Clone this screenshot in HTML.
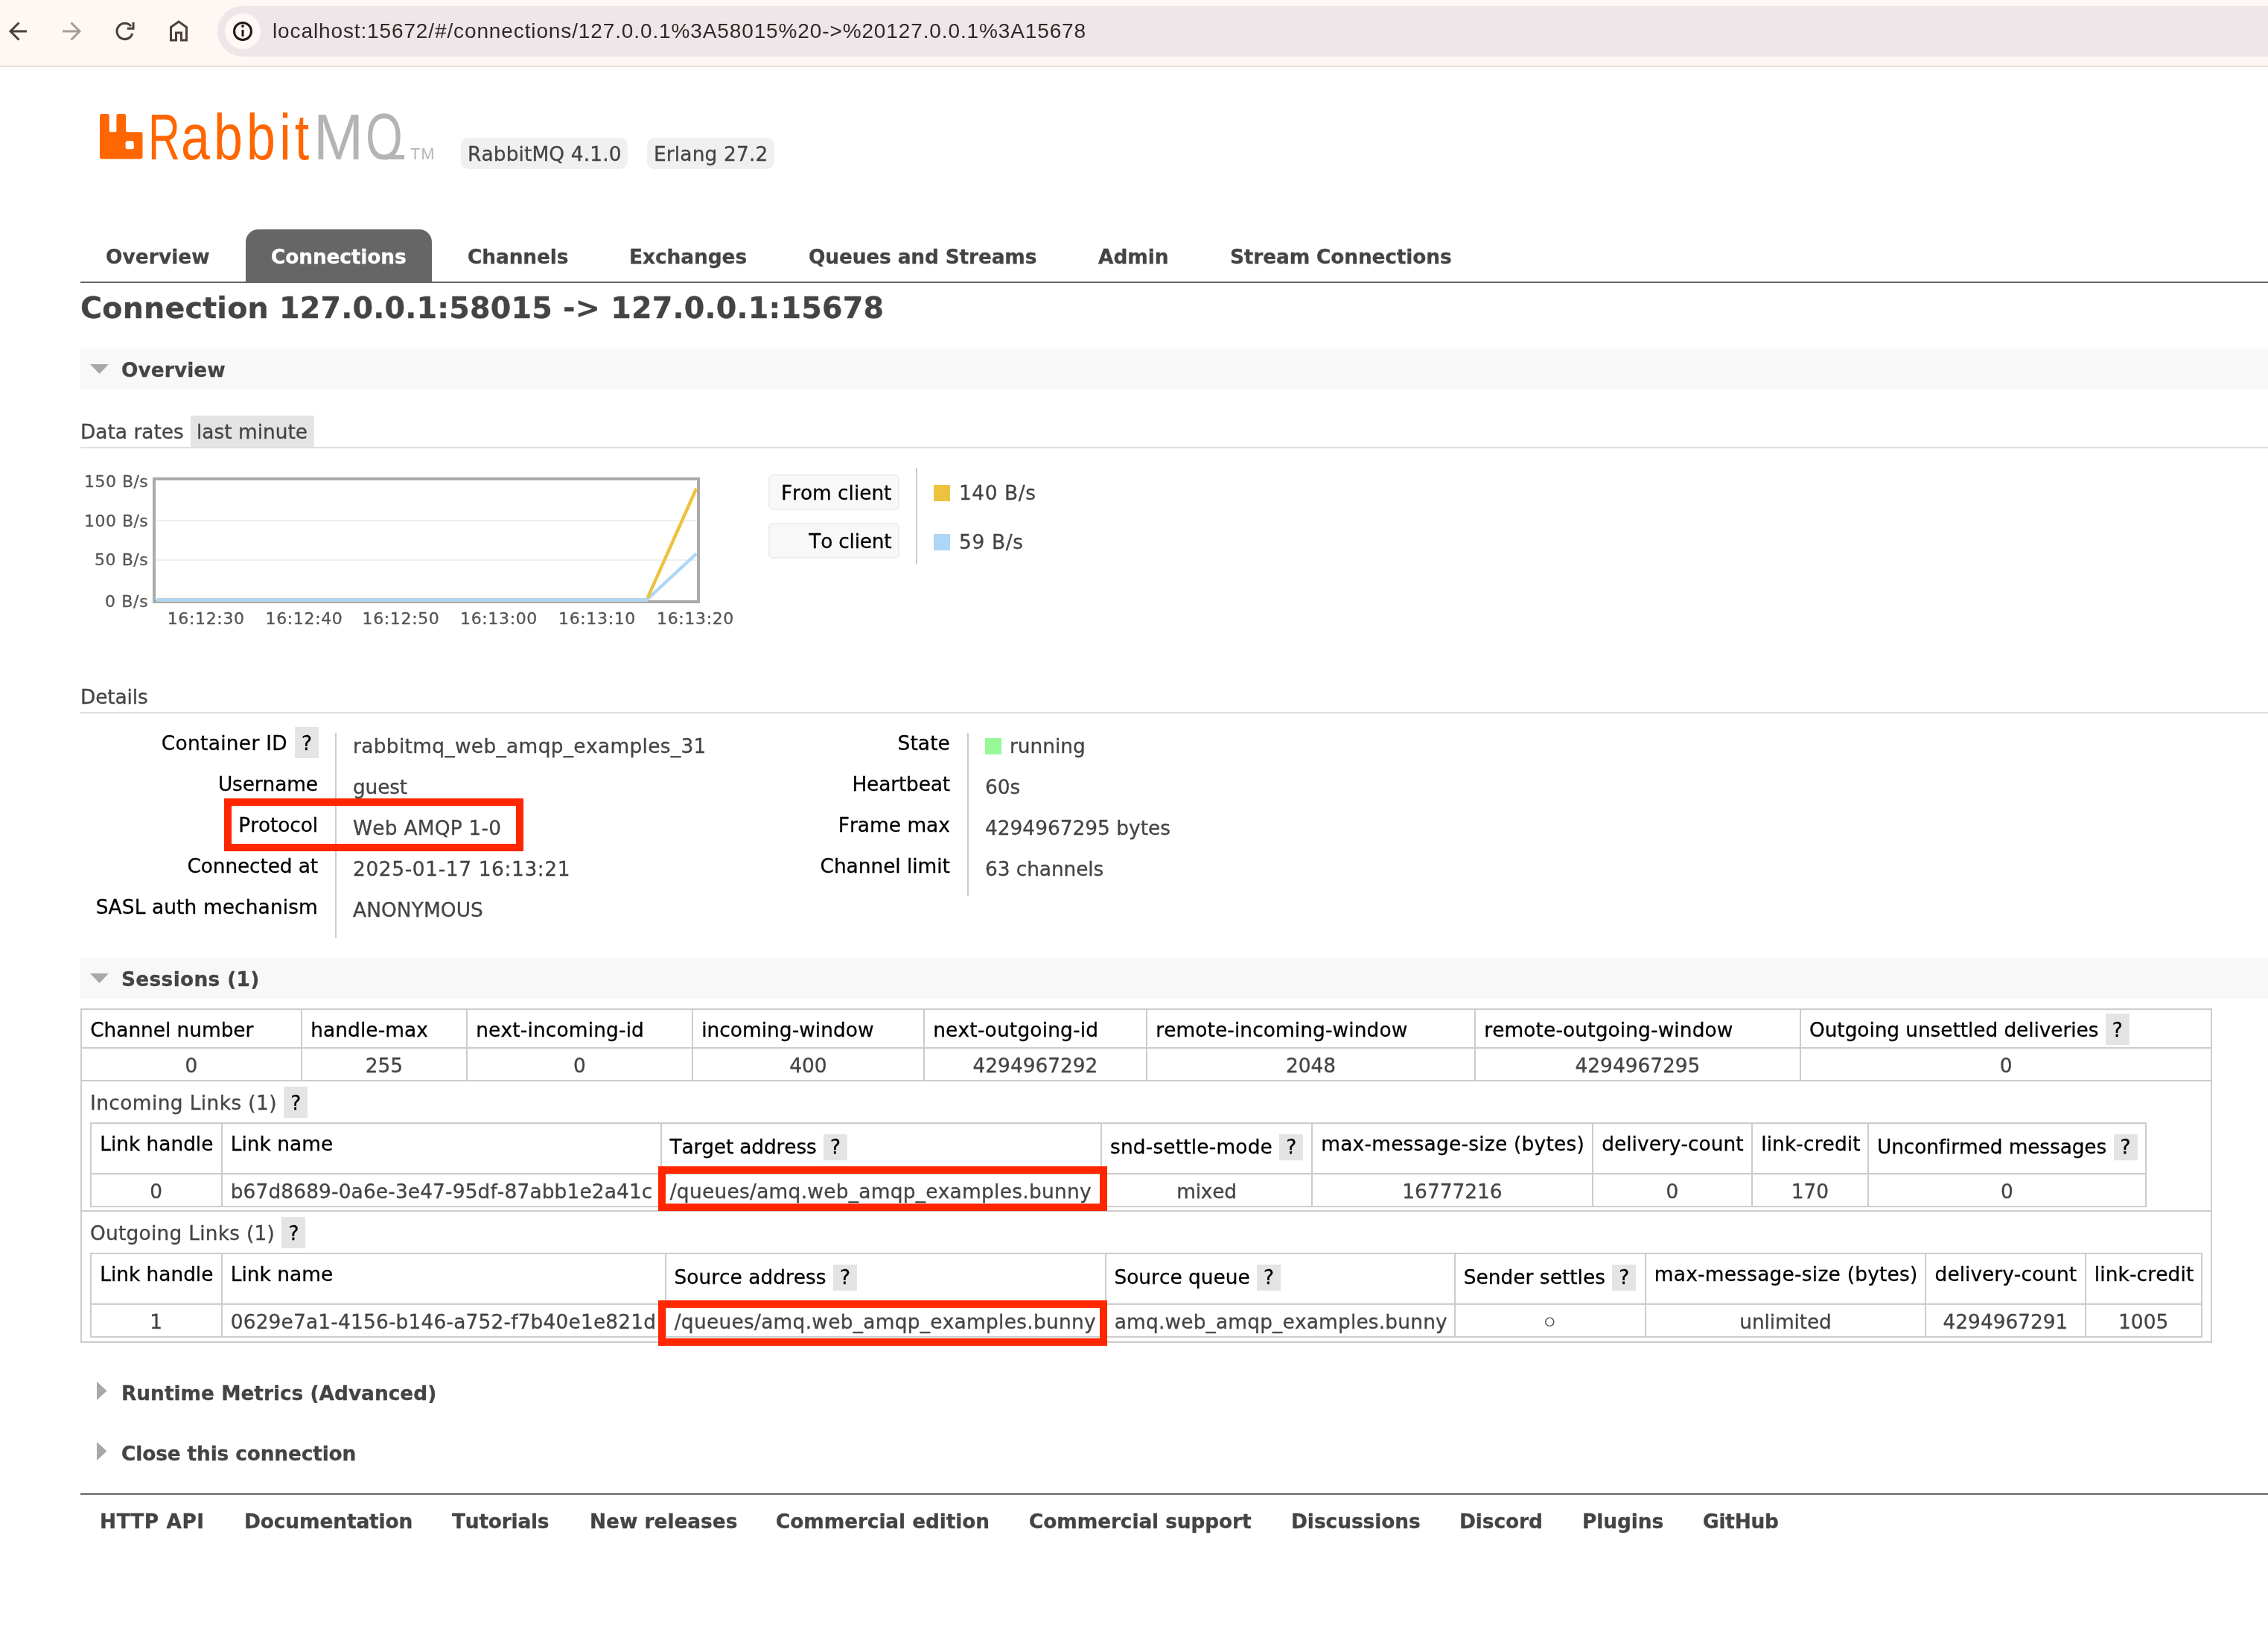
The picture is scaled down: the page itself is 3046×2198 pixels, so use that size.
<!DOCTYPE html>
<html lang="en"><head><meta charset="utf-8"><title>RabbitMQ Management</title>
<style>
html,body{margin:0;padding:0;background:#fff;}
body{width:3046px;height:2198px;position:relative;overflow:hidden;font-family:"DejaVu Sans","Liberation Sans",sans-serif;}
#p{position:absolute;left:0;top:0;width:3046px;height:2198px;will-change:transform;}
#p>div,#p>svg{position:absolute;}
.t{white-space:nowrap;line-height:1;font-size:26.4px;color:#444;font-kerning:none;-webkit-text-stroke:.3px;}
.l{-webkit-text-stroke:0;}

</style></head><body><div id="p">
<div style="left:0px;top:0px;width:3046px;height:88px;background:#fef7f4;"></div>
<div style="left:0px;top:88px;width:3046px;height:2px;background:#e8dfdc;"></div>
<div style="left:292px;top:8px;width:2800px;height:68px;background:#ede7e9;border-radius:34px;"></div>
<div style="left:302px;top:18px;width:48px;height:48px;background:#fef7f4;border-radius:24px;"></div>
<svg style="left:0;top:0" width="360" height="88" viewBox="0 0 360 88" fill="none" stroke-linecap="butt" stroke-linejoin="miter">
<g stroke="#4d3f39" stroke-width="3">
<path d="M36 42H15M25.5 30.5L14 42l11.5 11.5"/>
<path d="M175.800 35.200A10.600 10.600 0 1 0 177.800 45"/><path d="M179 30v8.200h-8.200"/>
<path d="M229.5 54V36.5L240 29l10.500 7.500V54h-7V44h-7v10z" stroke-linejoin="miter"/>
</g>
<g stroke="#a59d9a" stroke-width="3"><path d="M84 42h21M95.500 30.500L107 42 95.500 53.500"/></g>
<circle cx="326" cy="42" r="11.500" stroke="#1f1a19" stroke-width="3"/>
<path d="M326 40v9" stroke="#1f1a19" stroke-width="3"/><circle cx="326" cy="35" r="1.900" fill="#1f1a19"/>
</svg>
<div class="t l" style="left:366.00px;top:28.30px;font-size:28px;color:#2f2926;font-family:'Liberation Sans',sans-serif;letter-spacing:0.878px;">localhost:15672/#/connections/127.0.0.1%3A58015%20->%20127.0.0.1%3A15678</div>
<svg style="left:133.2px;top:152px" width="59" height="62.400" viewBox="0 0 58 62" preserveAspectRatio="none">
<path fill="#f60" d="M55.500 25H37.500a2 2 0 0 1-2-2V3.500A2.500 2.500 0 0 0 33 1h-7.500A2.500 2.500 0 0 0 23 3.500V23a2 2 0 0 1-2 2h-5.500a2 2 0 0 1-2-2V3.500A2.500 2.500 0 0 0 11 1H3.500A2.500 2.500 0 0 0 1 3.500v55A2.500 2.500 0 0 0 3.500 61h51.500a2.500 2.500 0 0 0 2.500-2.500V27.500A2.500 2.500 0 0 0 55.500 25zM46 45.500a2.500 2.500 0 0 1-2.500 2.500h-6a2.500 2.500 0 0 1-2.500-2.500v-6a2.500 2.500 0 0 1 2.500-2.500h6a2.500 2.500 0 0 1 2.500 2.500z"/>
</svg>
<div class="t l" style="left:199px;top:140.5px;font-size:87.5px;color:#f60;font-family:'Liberation Sans',sans-serif"><span style="display:inline-block;transform:scaleX(.68);transform-origin:0 0;margin-right:-19px">R</span><span style="display:inline-block;transform:scaleX(.8);transform-origin:0 0;letter-spacing:6.4px">abbit</span></div>
<div class="t l" style="left:420.8px;top:140.5px;font-size:87.5px;color:#b4b4b4;font-family:'Liberation Sans',sans-serif"><span style="display:inline-block;transform:scaleX(.92);transform-origin:0 0">M</span><span style="display:inline-block;transform:scaleX(.73);transform-origin:0 0;margin-left:-2.3px;clip-path:inset(0 0 13.4px 0)">Q</span></div>
<div style="left:517px;top:208.2px;width:25.7px;height:5.8px;background:#b4b4b4;"></div>
<div class="t l" style="left:551.00px;top:196.53px;font-size:21.5px;color:#b4b4b4;font-family:'Liberation Sans',sans-serif;letter-spacing:1.479px;">TM</div>
<div style="left:619px;top:185px;width:224px;height:42px;background:#f0f0f0;border-radius:10px;"></div>
<div class="t" style="left:628.00px;top:193.82px;letter-spacing:0.130px;">RabbitMQ 4.1.0</div>
<div style="left:869px;top:185px;width:171px;height:42px;background:#f0f0f0;border-radius:10px;"></div>
<div class="t" style="left:878.00px;top:193.82px;letter-spacing:0.162px;">Erlang 27.2</div>
<div style="left:330px;top:308px;width:250px;height:71px;background:#666;border-radius:17px 17px 0 0;"></div>
<div style="left:108px;top:378px;width:2938px;height:2.2px;background:#666;"></div>
<div class="t" style="left:142.00px;top:331.82px;font-weight:700;letter-spacing:0.086px;">Overview</div>
<div class="t" style="left:364.00px;top:331.82px;color:#fff;font-weight:700;letter-spacing:-0.129px;">Connections</div>
<div class="t" style="left:628.00px;top:331.82px;font-weight:700;letter-spacing:-0.111px;">Channels</div>
<div class="t" style="left:845.00px;top:331.82px;font-weight:700;letter-spacing:-0.061px;">Exchanges</div>
<div class="t" style="left:1086.00px;top:331.82px;font-weight:700;letter-spacing:-0.150px;">Queues and Streams</div>
<div class="t" style="left:1475.00px;top:331.82px;font-weight:700;">Admin</div>
<div class="t" style="left:1652.00px;top:331.82px;font-weight:700;letter-spacing:-0.137px;">Stream Connections</div>
<div class="t" style="left:108.00px;top:393.74px;font-size:39.6px;font-weight:700;letter-spacing:0.220px;">Connection 127.0.0.1:58015 -> 127.0.0.1:15678</div>
<div style="left:108px;top:468px;width:2938px;height:55px;background:#f8f8f8;"></div>
<svg style="left:120px;top:487.8px" width="28" height="15" viewBox="0 0 28 15"><path d="M1 1h25L13.500 14z" fill="#a8a8a8"/></svg>
<div class="t" style="left:163.00px;top:484.02px;font-weight:700;letter-spacing:0.086px;">Overview</div>
<div class="t" style="left:108.00px;top:566.82px;">Data rates</div>
<div style="left:256px;top:558px;width:166px;height:42px;background:#e4e4e4;"></div>
<div class="t" style="left:264.00px;top:566.82px;letter-spacing:-0.008px;">last minute</div>
<div style="left:108px;top:600px;width:2938px;height:1.8px;background:#dfdfdf;"></div>
<div style="left:205.3px;top:641.1px;width:734.4px;height:168.6px;background:#fff;border:4.400px solid #aaa;box-sizing:border-box;"></div>
<div style="left:210px;top:698px;width:725px;height:2px;background:#eee;"></div>
<div style="left:210px;top:751px;width:725px;height:2px;background:#eee;"></div>
<svg style="left:205px;top:641px" width="735" height="170" viewBox="205 641 735 170" fill="none" stroke-width="4.400" stroke-linejoin="round">
<path d="M210 805.500H868.500L935.200 743.500" stroke="#aed6f6"/>
<path d="M210 805.500H868.500L935.200 656" stroke="#edc240"/>
<path d="M210 805.500H868.500L935.200 743.500" stroke="#aed6f6" stroke-dasharray="662 1000"/>
</svg>
<div class="t" style="left:113.04px;top:635.82px;font-size:22px;color:#555;letter-spacing:0.473px;">150 B/s</div>
<div class="t" style="left:113.04px;top:688.82px;font-size:22px;color:#555;letter-spacing:0.473px;">100 B/s</div>
<div class="t" style="left:127.03px;top:741.32px;font-size:22px;color:#555;letter-spacing:0.553px;">50 B/s</div>
<div class="t" style="left:141.02px;top:797.02px;font-size:22px;color:#555;letter-spacing:0.664px;">0 B/s</div>
<div class="t" style="left:224.74px;top:820.02px;font-size:22px;color:#545454;letter-spacing:0.640px;">16:12:30</div>
<div class="t" style="left:356.54px;top:820.02px;font-size:22px;color:#545454;letter-spacing:0.640px;">16:12:40</div>
<div class="t" style="left:486.54px;top:820.02px;font-size:22px;color:#545454;letter-spacing:0.640px;">16:12:50</div>
<div class="t" style="left:618.04px;top:820.02px;font-size:22px;color:#545454;letter-spacing:0.640px;">16:13:00</div>
<div class="t" style="left:750.04px;top:820.02px;font-size:22px;color:#545454;letter-spacing:0.640px;">16:13:10</div>
<div class="t" style="left:882.04px;top:820.02px;font-size:22px;color:#545454;letter-spacing:0.640px;">16:13:20</div>
<div style="left:1032px;top:637px;width:176px;height:47.5px;background:#f8f8f8;border:2px solid #eee;box-sizing:border-box;border-radius:6px;"></div>
<div class="t" style="left:1048.97px;top:648.82px;color:#000;letter-spacing:-0.026px;">From client</div>
<div style="left:1032px;top:702px;width:176px;height:47.5px;background:#f8f8f8;border:2px solid #eee;box-sizing:border-box;border-radius:6px;"></div>
<div class="t" style="left:1086.25px;top:713.82px;color:#000;letter-spacing:-0.214px;">To client</div>
<div style="left:1230px;top:628px;width:2px;height:130px;background:#ccc;"></div>
<div style="left:1254px;top:651px;width:22px;height:22px;background:#edc240;"></div>
<div style="left:1254px;top:717px;width:22px;height:22px;background:#aed6f6;"></div>
<div class="t" style="left:1288.00px;top:648.82px;letter-spacing:0.568px;">140 B/s</div>
<div class="t" style="left:1288.00px;top:714.82px;letter-spacing:0.663px;">59 B/s</div>
<div class="t" style="left:108.00px;top:922.82px;letter-spacing:-0.135px;">Details</div>
<div style="left:108px;top:956px;width:2938px;height:1.8px;background:#dfdfdf;"></div>
<div style="left:450px;top:984px;width:2px;height:275px;background:#ccc;"></div>
<div style="left:1299px;top:984px;width:2px;height:219px;background:#ccc;"></div>
<div class="t" style="left:216.86px;top:985.02px;color:#000;letter-spacing:0.302px;">Container ID</div>
<div class="t" style="left:474.00px;top:989.02px;letter-spacing:0.342px;">rabbitmq_web_amqp_examples_31</div>
<div class="t" style="left:292.91px;top:1040.02px;color:#000;letter-spacing:-0.120px;">Username</div>
<div class="t" style="left:474.00px;top:1044.02px;letter-spacing:-0.158px;">guest</div>
<div class="t" style="left:320.34px;top:1095.02px;color:#000;letter-spacing:-0.097px;">Protocol</div>
<div class="t" style="left:474.00px;top:1099.02px;letter-spacing:0.242px;">Web AMQP 1-0</div>
<div class="t" style="left:251.49px;top:1150.02px;color:#000;letter-spacing:-0.131px;">Connected at</div>
<div class="t" style="left:474.00px;top:1154.02px;letter-spacing:0.627px;">2025-01-17 16:13:21</div>
<div class="t" style="left:128.71px;top:1205.02px;color:#000;letter-spacing:0.122px;">SASL auth mechanism</div>
<div class="t" style="left:474.00px;top:1209.02px;letter-spacing:0.098px;">ANONYMOUS</div>
<div style="left:396px;top:976px;width:32px;height:41.7px;background:#e4e4e4;"></div>
<div class="t" style="left:404.99px;top:985.02px;color:#000;">?</div>
<div class="t" style="left:1205.54px;top:985.02px;color:#000;letter-spacing:0.116px;">State</div>
<div class="t" style="left:1356.00px;top:989.02px;letter-spacing:-0.011px;">running</div>
<div class="t" style="left:1144.45px;top:1040.02px;color:#000;letter-spacing:-0.162px;">Heartbeat</div>
<div class="t" style="left:1323.00px;top:1044.02px;">60s</div>
<div class="t" style="left:1125.78px;top:1095.02px;color:#000;letter-spacing:0.014px;">Frame max</div>
<div class="t" style="left:1323.00px;top:1099.02px;">4294967295 bytes</div>
<div class="t" style="left:1101.52px;top:1150.02px;color:#000;letter-spacing:-0.029px;">Channel limit</div>
<div class="t" style="left:1323.00px;top:1154.02px;letter-spacing:-0.078px;">63 channels</div>
<div style="left:1323px;top:991px;width:22px;height:22px;background:#98f898;"></div>
<div style="left:108px;top:1286px;width:2938px;height:55px;background:#f8f8f8;"></div>
<svg style="left:120px;top:1305.8px" width="28" height="15" viewBox="0 0 28 15"><path d="M1 1h25L13.500 14z" fill="#a8a8a8"/></svg>
<div class="t" style="left:163.00px;top:1302.02px;font-weight:700;letter-spacing:0.328px;">Sessions (1)</div>
<div style="left:108px;top:1354px;width:2863.2px;height:2px;background:#ccc;"></div>
<div style="left:108px;top:1406px;width:2863.2px;height:2px;background:#ccc;"></div>
<div style="left:108px;top:1450px;width:2863.2px;height:2px;background:#ccc;"></div>
<div style="left:108px;top:1625px;width:2863.2px;height:2px;background:#ccc;"></div>
<div style="left:108px;top:1800.5px;width:2863.2px;height:2px;background:#ccc;"></div>
<div style="left:404px;top:1354px;width:2px;height:98px;background:#ccc;"></div>
<div style="left:626px;top:1354px;width:2px;height:98px;background:#ccc;"></div>
<div style="left:929px;top:1354px;width:2px;height:98px;background:#ccc;"></div>
<div style="left:1240px;top:1354px;width:2px;height:98px;background:#ccc;"></div>
<div style="left:1539px;top:1354px;width:2px;height:98px;background:#ccc;"></div>
<div style="left:1980px;top:1354px;width:2px;height:98px;background:#ccc;"></div>
<div style="left:2417px;top:1354px;width:2px;height:98px;background:#ccc;"></div>
<div style="left:108px;top:1354px;width:2px;height:448.5px;background:#ccc;"></div>
<div style="left:2969.2px;top:1354px;width:2px;height:448.5px;background:#ccc;"></div>
<div class="t" style="left:121.20px;top:1369.82px;color:#000;letter-spacing:-0.040px;">Channel number</div>
<div class="t" style="left:417.20px;top:1369.82px;color:#000;letter-spacing:0.085px;">handle-max</div>
<div class="t" style="left:639.20px;top:1369.82px;color:#000;letter-spacing:0.160px;">next-incoming-id</div>
<div class="t" style="left:942.20px;top:1369.82px;color:#000;letter-spacing:0.029px;">incoming-window</div>
<div class="t" style="left:1253.20px;top:1369.82px;color:#000;letter-spacing:0.192px;">next-outgoing-id</div>
<div class="t" style="left:1552.20px;top:1369.82px;color:#000;letter-spacing:0.100px;">remote-incoming-window</div>
<div class="t" style="left:1993.20px;top:1369.82px;color:#000;letter-spacing:0.122px;">remote-outgoing-window</div>
<div class="t" style="left:2430.00px;top:1369.82px;color:#000;letter-spacing:-0.073px;">Outgoing unsettled deliveries</div>
<div style="left:2827.7688px;top:1361px;width:32px;height:41.7px;background:#e4e4e4;"></div>
<div class="t" style="left:2836.76px;top:1369.82px;color:#000;">?</div>
<div class="t" style="left:248.60px;top:1418.32px;">0</div>
<div class="t" style="left:490.81px;top:1418.32px;letter-spacing:-0.006px;">255</div>
<div class="t" style="left:770.10px;top:1418.32px;">0</div>
<div class="t" style="left:1060.31px;top:1418.32px;letter-spacing:-0.006px;">400</div>
<div class="t" style="left:1306.55px;top:1418.32px;letter-spacing:-0.006px;">4294967292</div>
<div class="t" style="left:1726.92px;top:1418.32px;letter-spacing:-0.006px;">2048</div>
<div class="t" style="left:2115.55px;top:1418.32px;letter-spacing:-0.006px;">4294967295</div>
<div class="t" style="left:2685.70px;top:1418.32px;">0</div>
<div class="t" style="left:121.00px;top:1467.82px;letter-spacing:0.408px;">Incoming Links (1)</div>
<div style="left:381.35679999999996px;top:1459px;width:32px;height:41.7px;background:#e4e4e4;"></div>
<div class="t" style="left:390.35px;top:1467.82px;color:#000;">?</div>
<div class="t" style="left:121.00px;top:1642.82px;letter-spacing:0.252px;">Outgoing Links (1)</div>
<div style="left:378.42639999999994px;top:1634px;width:32px;height:41.7px;background:#e4e4e4;"></div>
<div class="t" style="left:387.42px;top:1642.82px;color:#000;">?</div>
<div style="left:121px;top:1507px;width:2762px;height:2px;background:#ccc;"></div>
<div style="left:121px;top:1574.5px;width:2762px;height:2px;background:#ccc;"></div>
<div style="left:121px;top:1619px;width:2762px;height:2px;background:#ccc;"></div>
<div style="left:121px;top:1507px;width:2px;height:114px;background:#ccc;"></div>
<div style="left:296.5px;top:1507px;width:2px;height:114px;background:#ccc;"></div>
<div style="left:886.5px;top:1507px;width:2px;height:114px;background:#ccc;"></div>
<div style="left:1478px;top:1507px;width:2px;height:114px;background:#ccc;"></div>
<div style="left:1761px;top:1507px;width:2px;height:114px;background:#ccc;"></div>
<div style="left:2138px;top:1507px;width:2px;height:114px;background:#ccc;"></div>
<div style="left:2352px;top:1507px;width:2px;height:114px;background:#ccc;"></div>
<div style="left:2508px;top:1507px;width:2px;height:114px;background:#ccc;"></div>
<div style="left:2881px;top:1507px;width:2px;height:114px;background:#ccc;"></div>
<div class="t" style="left:134.20px;top:1522.82px;color:#000;letter-spacing:-0.014px;">Link handle</div>
<div class="t" style="left:309.70px;top:1522.82px;color:#000;letter-spacing:0.027px;">Link name</div>
<div class="t" style="left:899.50px;top:1526.92px;color:#000;letter-spacing:-0.146px;">Target address</div>
<div style="left:1105.948px;top:1522.6px;width:32px;height:35.5px;background:#e4e4e4;"></div>
<div class="t" style="left:1114.94px;top:1526.92px;color:#000;">?</div>
<div class="t" style="left:1491.00px;top:1526.92px;color:#000;letter-spacing:0.173px;">snd-settle-mode</div>
<div style="left:1718.3304px;top:1522.6px;width:32px;height:35.5px;background:#e4e4e4;"></div>
<div class="t" style="left:1727.32px;top:1526.92px;color:#000;">?</div>
<div class="t" style="left:1774.20px;top:1522.82px;color:#000;letter-spacing:0.243px;">max-message-size (bytes)</div>
<div class="t" style="left:2151.20px;top:1522.82px;color:#000;letter-spacing:0.034px;">delivery-count</div>
<div class="t" style="left:2365.20px;top:1522.82px;color:#000;letter-spacing:0.124px;">link-credit</div>
<div class="t" style="left:2521.00px;top:1526.92px;color:#000;letter-spacing:-0.111px;">Unconfirmed messages</div>
<div style="left:2838.5128px;top:1522.6px;width:32px;height:35.5px;background:#e4e4e4;"></div>
<div class="t" style="left:2847.51px;top:1526.92px;color:#000;">?</div>
<div class="t" style="left:201.35px;top:1586.92px;">0</div>
<div class="t" style="left:309.70px;top:1586.92px;letter-spacing:0.137px;">b67d8689-0a6e-3e47-95df-87abb1e2a41c</div>
<div class="t" style="left:899.70px;top:1586.92px;letter-spacing:0.282px;">/queues/amq.web_amqp_examples.bunny</div>
<div class="t" style="left:1580.13px;top:1586.92px;letter-spacing:-0.189px;">mixed</div>
<div class="t" style="left:1883.34px;top:1586.92px;letter-spacing:-0.006px;">16777216</div>
<div class="t" style="left:2237.60px;top:1586.92px;">0</div>
<div class="t" style="left:2405.81px;top:1586.92px;letter-spacing:-0.006px;">170</div>
<div class="t" style="left:2687.10px;top:1586.92px;">0</div>
<div style="left:121px;top:1682px;width:2836.7px;height:2px;background:#ccc;"></div>
<div style="left:121px;top:1749.5px;width:2836.7px;height:2px;background:#ccc;"></div>
<div style="left:121px;top:1794px;width:2836.7px;height:2px;background:#ccc;"></div>
<div style="left:121px;top:1682px;width:2px;height:114px;background:#ccc;"></div>
<div style="left:296.5px;top:1682px;width:2px;height:114px;background:#ccc;"></div>
<div style="left:892.5px;top:1682px;width:2px;height:114px;background:#ccc;"></div>
<div style="left:1483.5px;top:1682px;width:2px;height:114px;background:#ccc;"></div>
<div style="left:1952.8px;top:1682px;width:2px;height:114px;background:#ccc;"></div>
<div style="left:2208.6px;top:1682px;width:2px;height:114px;background:#ccc;"></div>
<div style="left:2585.4px;top:1682px;width:2px;height:114px;background:#ccc;"></div>
<div style="left:2799.6px;top:1682px;width:2px;height:114px;background:#ccc;"></div>
<div style="left:2955.7px;top:1682px;width:2px;height:114px;background:#ccc;"></div>
<div class="t" style="left:134.20px;top:1697.82px;color:#000;letter-spacing:-0.014px;">Link handle</div>
<div class="t" style="left:309.70px;top:1697.82px;color:#000;letter-spacing:0.027px;">Link name</div>
<div class="t" style="left:905.50px;top:1701.92px;color:#000;letter-spacing:0.013px;">Source address</div>
<div style="left:1118.9176px;top:1697.6px;width:32px;height:35.5px;background:#e4e4e4;"></div>
<div class="t" style="left:1127.91px;top:1701.92px;color:#000;">?</div>
<div class="t" style="left:1496.50px;top:1701.92px;color:#000;letter-spacing:-0.014px;">Source queue</div>
<div style="left:1687.9792px;top:1697.6px;width:32px;height:35.5px;background:#e4e4e4;"></div>
<div class="t" style="left:1696.97px;top:1701.92px;color:#000;">?</div>
<div class="t" style="left:1965.80px;top:1701.92px;color:#000;letter-spacing:0.018px;">Sender settles</div>
<div style="left:2165.3576px;top:1697.6px;width:32px;height:35.5px;background:#e4e4e4;"></div>
<div class="t" style="left:2174.35px;top:1701.92px;color:#000;">?</div>
<div class="t" style="left:2221.80px;top:1697.82px;color:#000;letter-spacing:0.243px;">max-message-size (bytes)</div>
<div class="t" style="left:2598.60px;top:1697.82px;color:#000;letter-spacing:0.034px;">delivery-count</div>
<div class="t" style="left:2812.80px;top:1697.82px;color:#000;letter-spacing:0.124px;">link-credit</div>
<div class="t" style="left:201.35px;top:1761.92px;">1</div>
<div class="t" style="left:309.70px;top:1761.92px;letter-spacing:0.184px;">0629e7a1-4156-b146-a752-f7b40e1e821d</div>
<div class="t" style="left:905.70px;top:1761.92px;letter-spacing:0.282px;">/queues/amq.web_amqp_examples.bunny</div>
<div class="t" style="left:1496.70px;top:1761.92px;letter-spacing:0.187px;">amq.web_amqp_examples.bunny</div>
<div class="t" style="left:2074.39px;top:1766.70px;font-size:15.6px;">○</div>
<div class="t" style="left:2336.30px;top:1761.92px;letter-spacing:-0.127px;">unlimited</div>
<div class="t" style="left:2609.55px;top:1761.92px;letter-spacing:-0.006px;">4294967291</div>
<div class="t" style="left:2845.07px;top:1761.92px;letter-spacing:-0.006px;">1005</div>
<svg style="left:129px;top:1854px" width="16" height="27" viewBox="0 0 16 27"><path d="M1 1v25L14.500 13.500z" fill="#a8a8a8"/></svg>
<div class="t" style="left:163.00px;top:1858.02px;font-weight:700;">Runtime Metrics (Advanced)</div>
<svg style="left:129px;top:1935px" width="16" height="27" viewBox="0 0 16 27"><path d="M1 1v25L14.500 13.500z" fill="#a8a8a8"/></svg>
<div class="t" style="left:163.00px;top:1939.02px;font-weight:700;letter-spacing:-0.139px;">Close this connection</div>
<div style="left:108px;top:2005px;width:2938px;height:2.2px;background:#666;"></div>
<div class="t" style="left:134.00px;top:2029.82px;font-weight:700;letter-spacing:0.561px;">HTTP API</div>
<div class="t" style="left:328.00px;top:2029.82px;font-weight:700;letter-spacing:-0.111px;">Documentation</div>
<div class="t" style="left:607.00px;top:2029.82px;font-weight:700;letter-spacing:-0.202px;">Tutorials</div>
<div class="t" style="left:792.00px;top:2029.82px;font-weight:700;letter-spacing:-0.013px;">New releases</div>
<div class="t" style="left:1042.00px;top:2029.82px;font-weight:700;letter-spacing:-0.091px;">Commercial edition</div>
<div class="t" style="left:1382.00px;top:2029.82px;font-weight:700;letter-spacing:-0.090px;">Commercial support</div>
<div class="t" style="left:1734.00px;top:2029.82px;font-weight:700;letter-spacing:-0.036px;">Discussions</div>
<div class="t" style="left:1960.00px;top:2029.82px;font-weight:700;letter-spacing:-0.079px;">Discord</div>
<div class="t" style="left:2125.00px;top:2029.82px;font-weight:700;letter-spacing:-0.077px;">Plugins</div>
<div class="t" style="left:2287.00px;top:2029.82px;font-weight:700;letter-spacing:-0.217px;">GitHub</div>
<div style="left:301px;top:1072px;width:402px;height:70.70000000000005px;border:10px solid #ff2600;box-sizing:border-box;"></div>
<div style="left:884px;top:1566px;width:603px;height:60px;border:10px solid #ff2600;box-sizing:border-box;"></div>
<div style="left:884px;top:1746px;width:603px;height:61px;border:10px solid #ff2600;box-sizing:border-box;"></div>
</div></body></html>
